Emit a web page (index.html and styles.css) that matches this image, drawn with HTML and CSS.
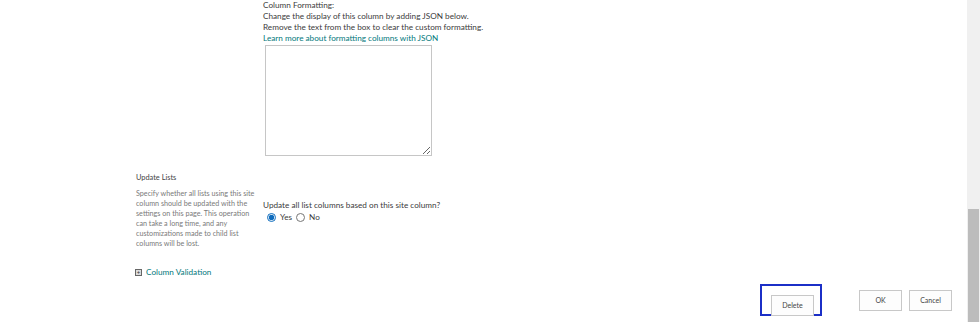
FILE: index.html
```html
<!DOCTYPE html>
<html lang="en">

<head>
    <meta charset="UTF-8">
    <title>Site Column Settings</title>
    <link rel="stylesheet" href="styles.css">
</head>

<body>
    <div class="frame">
        <div class="page">
            <div class="formatting">
                <div class="line">Column Formatting:</div>
                <div class="line">Change the display of this column by adding JSON below.</div>
                <div class="line">Remove the text from the box to clear the custom formatting.</div>
                <a class="line link" href="#">Learn more about formatting columns with JSON</a>
                <textarea class="json-box"></textarea>
            </div>

            <div class="section">
                <div class="section-left">
                    <h3 class="section-title">Update Lists</h3>
                    <p class="section-desc">
                        Specify whether all lists using this site<br>
                        column should be updated with the<br>
                        settings on this page. This operation<br>
                        can take a long time, and any<br>
                        customizations made to child list<br>
                        columns will be lost.
                    </p>
                </div>
                <div class="section-right">
                    <div class="question">Update all list columns based on this site column?</div>
                    <div class="radios">
                        <label><input type="radio" name="upd" checked>Yes</label>
                        <label><input type="radio" name="upd">No</label>
                    </div>
                </div>
            </div>

            <div class="validation">
                <span class="plus-box">+</span>
                <a class="link" href="#">Column Validation</a>
            </div>

            <div class="actions">
                <div class="highlight">
                    <button type="button" class="btn">Delete</button>
                </div>
                <button type="button" class="btn btn-ok">OK</button>
                <button type="button" class="btn">Cancel</button>
            </div>
        </div>

        <div class="scrollbar">
            <div class="thumb"></div>
        </div>
    </div>
</body>

</html>
```

FILE: styles.css
```css
html,
body {
    margin: 0;
    height: 100%;
    overflow: hidden;
    background-color: white;
}

body {
    font-family: Lato, "Open Sans", sans-serif;
    color: #3b3b3b;
}

.frame {
    display: flex;
    height: 322px;
}

.page {
    flex: 1;
}

.formatting {
    display: flex;
    flex-direction: column;
    align-items: flex-start;
    padding-left: 263px;
}

.line {
    font-size: 8.2px;
    line-height: 11px;
    white-space: nowrap;
}

.link {
    color: #03787c;
    text-decoration: none;
}

.json-box {
    margin: 1px 0 0 2px;
    width: 163px;
    height: 107px;
    border: 1px solid #c6c6c6;
    padding: 1px;
    resize: both;
}

.section {
    display: flex;
    margin-top: 17px;
}

.section-left {
    width: 122px;
    margin-left: 136px;
    margin-right: 5px;
}

.section-title {
    margin: 0;
    font-size: 7.4px;
    font-weight: normal;
    color: #444444;
    line-height: 10px;
}

.section-desc {
    margin: 6px 0 0;
    font-size: 7.2px;
    line-height: 10px;
    color: #7a7a7a;
    white-space: nowrap;
}

.section-right {
    padding-top: 27px;
}

.question {
    font-size: 8.2px;
    line-height: 11px;
}

.radios {
    display: flex;
    gap: 3px;
    margin-left: 3px;
    font-size: 8.2px;
    line-height: 12px;
}

.radios label {
    display: flex;
    align-items: center;
}

.radios input {
    width: 9px;
    height: 9px;
    margin: 0 4px 0 1px;
    accent-color: #0f6cbd;
}

.validation {
    display: flex;
    align-items: center;
    margin: 17px 0 0 135px;
    font-size: 8.2px;
    line-height: 12px;
}

.plus-box {
    display: inline-flex;
    align-items: center;
    justify-content: center;
    width: 5px;
    height: 5px;
    border: 1px solid #666666;
    font-size: 6px;
    line-height: 5px;
    color: #333333;
    margin-right: 4px;
    background-color: #dddddd;
}

.actions {
    display: flex;
    align-items: center;
    margin-top: 6px;
    padding-left: 760px;
}

.highlight {
    border: 2px solid #1b2fc7;
    padding: 6px 6px 1px 9px;
    box-sizing: border-box;
    height: 32px;
    margin-right: 37px;
}

.btn {
    font-family: inherit;
    font-size: 7px;
    color: #444444;
    background-color: #fdfdfd;
    border: 1px solid #c8c8c8;
    width: 43px;
    height: 21px;
    padding: 0;
}

.btn-ok {
    margin-right: 7px;
}

.scrollbar {
    width: 13px;
    background-color: #f0f0f0;
    display: flex;
    flex-direction: column;
}

.thumb {
    margin: 209px 1px 0;
    flex: 1;
    background-color: #bcbcbc;
}
```
